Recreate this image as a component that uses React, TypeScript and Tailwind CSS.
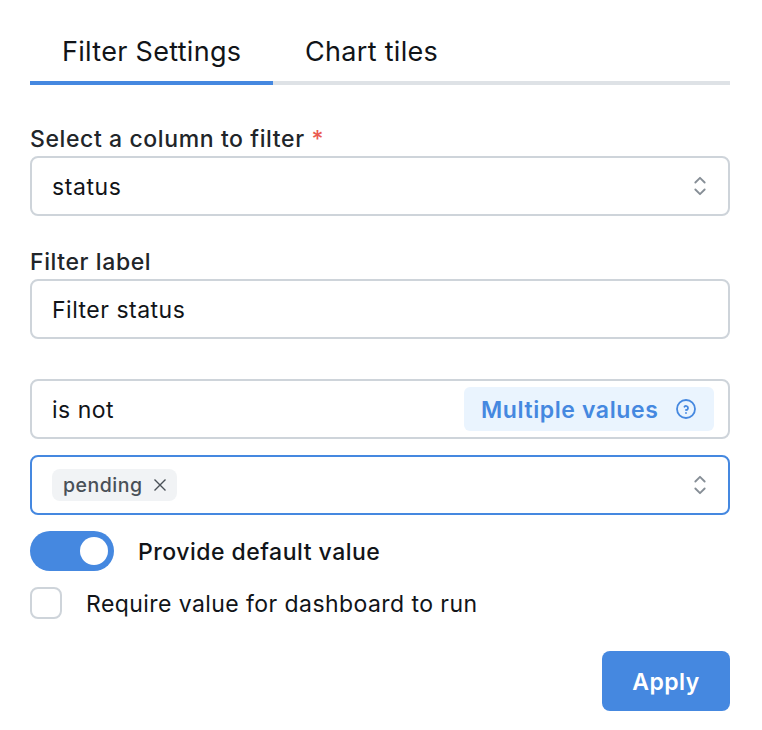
const selector = (
  <svg className="size-7 shrink-0 text-[#868e96]" viewBox="0 0 24 24" fill="none" stroke="currentColor" strokeWidth="1.6" strokeLinecap="round" strokeLinejoin="round">
    <path d="M8 9l4-4 4 4M16 15l-4 4-4-4" />
  </svg>
);

export default function App() {
  return (
    <div className="h-[730px] w-full bg-white pl-[30px] pr-8 pt-5 font-['Inter',sans-serif] text-[23px] leading-[30px] tracking-[0.5px] text-[#111418] [font-optical-sizing:none]">
      <div className="flex h-[65px] border-b-4 border-[#dee2e6] text-[27px] leading-[32px] tracking-[0.3px] whitespace-nowrap">
        <div className="-mb-1 w-[243px] border-b-4 border-[#4588e0] pl-8 pt-4">Filter Settings</div>
        <div className="pl-8 pt-4">Chart tiles</div>
      </div>
      <div className="mt-[38px] h-[33px] pt-px font-medium tracking-[0.6px] whitespace-nowrap text-[#212529]">Select a column to filter <span className="text-[#ea5a50]">*</span></div>
      <div className="flex h-[60px] items-center justify-between rounded-lg border-2 border-[#ced4da] pl-5 pr-[14px]">
        <span className="pt-0.5 tracking-[0.6px]">status</span>{selector}
      </div>
      <div className="mt-[30px] h-[33px] pt-px font-medium tracking-[0.6px] text-[#212529]">Filter label</div>
      <div className="flex h-[60px] items-center rounded-lg border-2 border-[#ced4da] pl-5 pt-0.5">Filter status</div>
      <div className="mt-10 flex h-[60px] items-center justify-between rounded-lg border-2 border-[#ced4da] pl-5 pr-[14px]">
        <span className="pt-0.5">is not</span>
        <div className="flex h-11 w-[250px] items-center justify-between rounded-md bg-[#eaf4fe] pl-[17px] pr-4 font-semibold tracking-[0.6px] text-[#4588e0]">
          <span className="pt-0.5 whitespace-nowrap">Multiple values</span>
          <svg className="size-6" viewBox="0 0 24 24" fill="none" stroke="currentColor" strokeWidth="1.8" strokeLinecap="round" strokeLinejoin="round">
            <circle cx="12" cy="12" r="9" /><path d="M12 16v.01M12 13a2 2 0 0 0 .9-3.8 2 2 0 0 0-2.4.5" />
          </svg>
        </div>
      </div>
      <div className="mt-4 flex h-[60px] items-center justify-between rounded-lg border-2 border-[#4588e0] pl-5 pr-[14px]">
        <div className="flex h-8 w-[125px] items-center justify-between rounded-lg bg-[#f1f3f5] px-[11px] text-[19.5px] font-medium text-[#495057]">
          <span>pending</span>
          <svg className="size-3 shrink-0" viewBox="0 0 12 12" fill="none" stroke="currentColor" strokeWidth="1.4"><path d="M.5.5l11 11M11.5.5L.5 11.5" /></svg>
        </div>{selector}
      </div>
      <div className="mt-4 flex h-10 items-center font-medium">
        <div className="flex h-10 w-[84px] items-center justify-end rounded-full bg-[#4588e0] pr-[6px]"><div className="size-7 rounded-full bg-white" /></div>
        <span className="ml-6 pt-0.5">Provide default value</span>
      </div>
      <div className="mt-4 flex h-8 items-center">
        <div className="size-8 rounded-lg border-2 border-[#ced4da]" /><span className="ml-6 pt-0.5 tracking-[0.43px]">Require value for dashboard to run</span>
      </div>
      <div className="mt-8 flex justify-end"><button className="h-[60px] w-32 rounded-lg bg-[#4588e0] pt-0.5 font-semibold text-white">Apply</button></div>
    </div>
  );
}
